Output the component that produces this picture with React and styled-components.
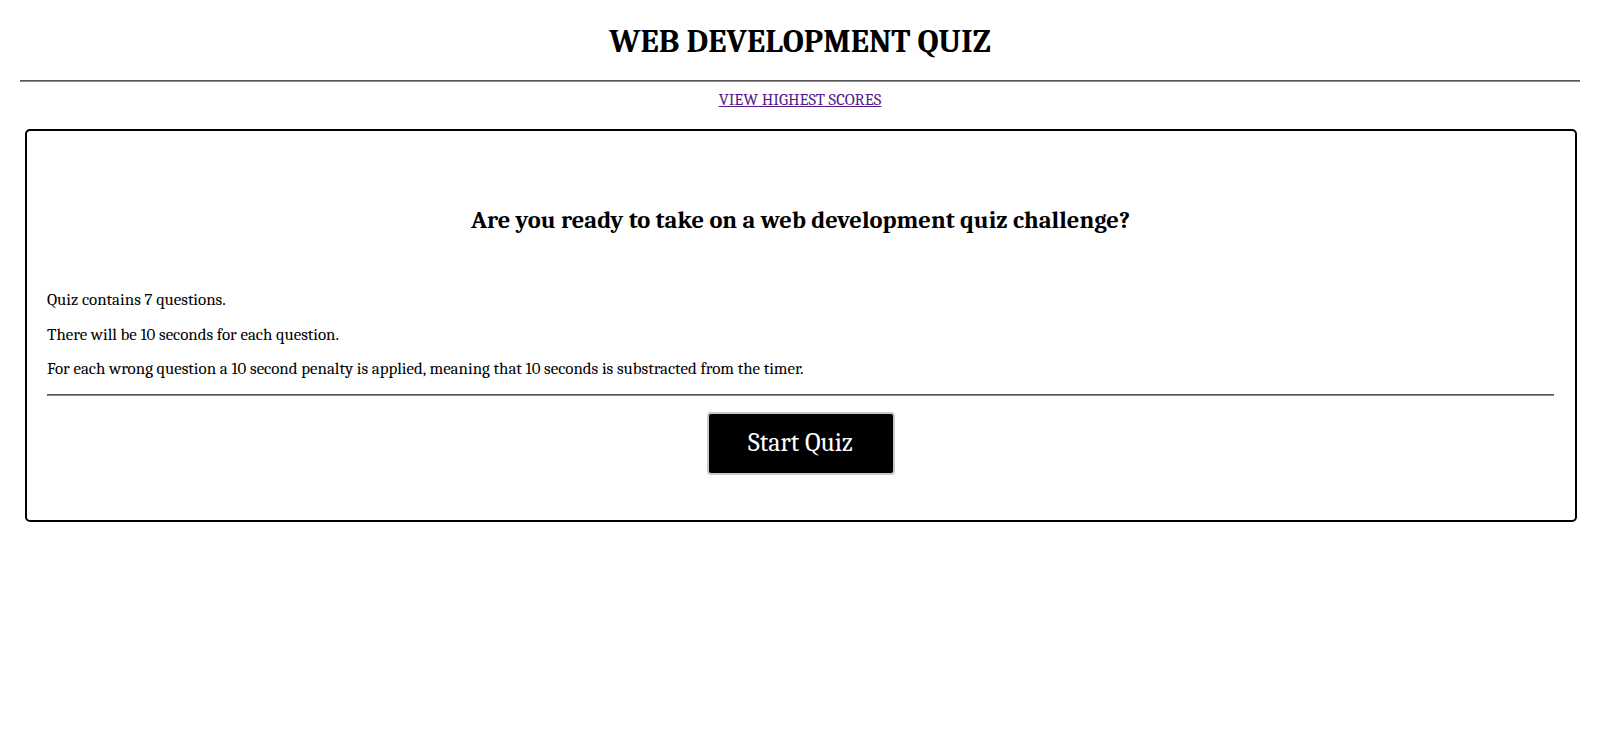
import styled, { createGlobalStyle } from "styled-components";

const GlobalStyle = createGlobalStyle`
  body {
    margin: 0;
    background: #fff;
    color: #000;
    font-family: Cambria, "Liberation Serif", "DejaVu Serif", serif;
  }
`;

const Header = styled.header`
  display: flex;
  flex-direction: column;
  align-items: center;
`;

const Title = styled.h1`
  margin: 23px 0 19px;
  font-size: 32.6px;
  line-height: 38px;
  font-weight: bold;
`;

const Rule = styled.hr`
  align-self: stretch;
  height: 0;
  margin: ${props => props.$margin || "0"};
  border: none;
  border-top: 1px solid #555;
  border-bottom: 1px solid #8a8a8a;
`;

const ScoresLink = styled.a`
  margin: 9px 0 20px;
  font-size: 16.6px;
  line-height: 18px;
  color: #551a8b;
  text-decoration: underline;
  cursor: pointer;
`;

const Card = styled.main`
  margin: 0 23px 0 25px;
  padding: 74px 21px 45px 20px;
  border: 2px solid #000;
  border-radius: 5px;
  display: flex;
  flex-direction: column;
`;

const Question = styled.h2`
  margin: 0 0 55px;
  text-align: center;
  font-size: 24.5px;
  line-height: 30px;
  font-weight: bold;
`;

const Info = styled.p`
  margin: 0 0 14.5px;
  font-size: 16.9px;
  line-height: 20px;
`;

const StartButton = styled.button`
  align-self: center;
  margin-top: 16px;
  width: 188px;
  height: 63px;
  background: #000;
  color: #fff;
  border: 2px solid #c8c8c8;
  border-radius: 4px;
  font-family: inherit;
  font-size: 26px;
  cursor: pointer;
`;

export default function App() {
  return (
    <>
      <GlobalStyle />
      <Header>
        <Title>WEB DEVELOPMENT QUIZ</Title>
        <Rule $margin="0 20px" />
        <ScoresLink>VIEW HIGHEST SCORES</ScoresLink>
      </Header>
      <Card>
        <Question>Are you ready to take on a web development quiz challenge?</Question>
        <Info>Quiz contains 7 questions.</Info>
        <Info>There will be 10 seconds for each question.</Info>
        <Info>
          For each wrong question a 10 second penalty is applied, meaning that 10 seconds is
          substracted from the timer.
        </Info>
        <Rule />
        <StartButton>Start Quiz</StartButton>
      </Card>
    </>
  );
}
